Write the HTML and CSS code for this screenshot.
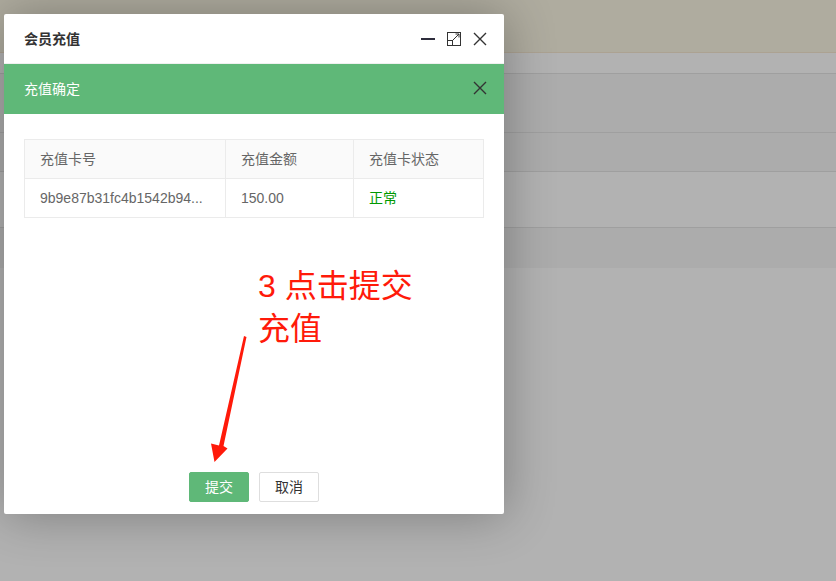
FILE: index.html
```html
<!DOCTYPE html>
<html lang="zh-CN">
<head>
    <meta charset="UTF-8">
    <meta name="viewport" content="width=device-width, initial-scale=1.0">
    <title>会员充值</title>
    <link rel="stylesheet" href="styles.css">
</head>
<body>
    <!-- Página ao fundo -->
    <div class="page">
        <div class="page-top"></div>
        <div class="page-row r1"></div>
        <div class="page-row r2 alt"></div>
        <div class="page-row r3 alt"></div>
        <div class="page-row r4"></div>
        <div class="page-row r5 alt"></div>
    </div>
    <div class="shade"></div>

    <!-- Janela de recarga -->
    <div class="layer">
        <div class="layer-title">
            <span class="layer-text">会员充值</span>
            <span class="layer-setwin">
                <svg width="14" height="14" viewBox="0 0 14 14"><rect x="0" y="6" width="14" height="2" fill="#2e2d3c"/></svg>
                <svg width="14" height="14" viewBox="0 0 14 14" fill="none" stroke="#333" stroke-width="1">
                    <rect x="0.5" y="0.5" width="13" height="13"/>
                    <rect x="0.5" y="8.5" width="5" height="5"/>
                    <path d="M6 8 L12 2 M8.5 2 H12 V5.5"/>
                </svg>
                <svg width="14" height="14" viewBox="0 0 14 14" stroke="#333" stroke-width="1.4"><path d="M1 1 L13 13 M13 1 L1 13"/></svg>
            </span>
        </div>

        <div class="layer-tip">
            <span class="layer-text">充值确定</span>
            <svg width="14" height="14" viewBox="0 0 14 14" stroke="#333" stroke-width="1.4"><path d="M1 1 L13 13 M13 1 L1 13"/></svg>
        </div>

        <div class="layer-content">
            <table class="card-table">
                <colgroup>
                    <col style="width: 201px">
                    <col style="width: 128px">
                    <col>
                </colgroup>
                <thead>
                    <tr>
                        <th>充值卡号</th>
                        <th>充值金额</th>
                        <th>充值卡状态</th>
                    </tr>
                </thead>
                <tbody>
                    <tr>
                        <td>9b9e87b31fc4b1542b94...</td>
                        <td>150.00</td>
                        <td class="status-ok">正常</td>
                    </tr>
                </tbody>
            </table>
        </div>

        <div class="layer-btn">
            <a class="btn btn-submit">提交</a>
            <a class="btn btn-cancel">取消</a>
        </div>
    </div>

    <!-- Anotação -->
    <div class="note">3 点击提交<br>充值</div>
    <svg class="note-arrow" width="836" height="581" viewBox="0 0 836 581">
        <polygon points="244,336 246.5,337 223.5,446 227.5,448.5 214.5,462 211,443.5 219,445.5" fill="#ff1a0a"/>
    </svg>
</body>
</html>
```

FILE: styles.css
```css
/* Reset */
* {
    margin: 0;
    padding: 0;
    box-sizing: border-box;
}

body {
    font-family: "Liberation Sans", "Noto Sans CJK SC", sans-serif;
    font-size: 14px;
    color: #333;
    background: #fff;
    width: 836px;
    height: 581px;
    overflow: hidden;
    position: relative;
}

/* Página ao fundo */
.page-top {
    height: 53px;
    background: #fbf7e4;
    border-bottom: 1px solid #f6e8d2;
}

.page-row {
    border-bottom: 1px solid #e4e4e4;
    background: #fff;
}

.page-row.alt {
    background: #f7f7f7;
}

.r1 { height: 21px; }
.r2 { height: 59px; }
.r3 { height: 39px; }
.r4 { height: 56px; }
.r5 { height: 40px; border-bottom: none; }

.shade {
    position: absolute;
    inset: 0;
    background: rgba(0, 0, 0, 0.3);
}

/* Janela */
.layer {
    position: absolute;
    left: 4px;
    top: 14px;
    width: 500px;
    height: 500px;
    background: #fff;
    border-radius: 2px;
    box-shadow: 1px 1px 50px rgba(0, 0, 0, 0.3);
    display: flex;
    flex-direction: column;
}

.layer-title {
    height: 50px;
    padding: 0 17px 0 20px;
    border-bottom: 1px solid #f0f0f0;
    display: flex;
    align-items: center;
    justify-content: space-between;
    font-weight: bold;
    color: #333;
}

.layer-text {
    margin-top: -2px;
}

.layer-setwin {
    display: flex;
    align-items: center;
    gap: 12px;
}

.layer-setwin svg {
    display: block;
}

.layer-tip {
    height: 50px;
    padding: 0 17px 0 20px;
    background: #5fb878;
    color: #fff;
    display: flex;
    align-items: center;
    justify-content: space-between;
}

.layer-tip svg {
    display: block;
    margin-top: -2px;
}

.layer-content {
    flex: 1;
    padding: 25px 20px;
}

/* Tabela */
.card-table {
    width: 100%;
    table-layout: fixed;
    border-collapse: collapse;
    border: 1px solid #ebebeb;
    color: #666;
}

.card-table th,
.card-table td {
    height: 39px;
    padding: 0 15px;
    line-height: 20px;
    text-align: left;
    font-weight: normal;
    white-space: nowrap;
    border: 1px solid #ebebeb;
}

.card-table th {
    background: #fafafa;
}

.status-ok {
    color: #090;
}

/* Botões */
.layer-btn {
    padding: 0 15px 12px;
    display: flex;
    justify-content: center;
    gap: 10px;
}

.btn {
    height: 30px;
    line-height: 28px;
    padding: 0 15px;
    border: 1px solid #dedede;
    border-radius: 2px;
    background: #fff;
    color: #333;
    cursor: pointer;
}

.btn-submit {
    border-color: #5fb878;
    background: #5fb878;
    color: #fff;
}

/* Anotação */
.note {
    position: absolute;
    left: 258px;
    top: 265px;
    font-size: 32px;
    line-height: 43px;
    color: #ff1a0a;
}

.note-arrow {
    position: absolute;
    left: 0;
    top: 0;
}
```
